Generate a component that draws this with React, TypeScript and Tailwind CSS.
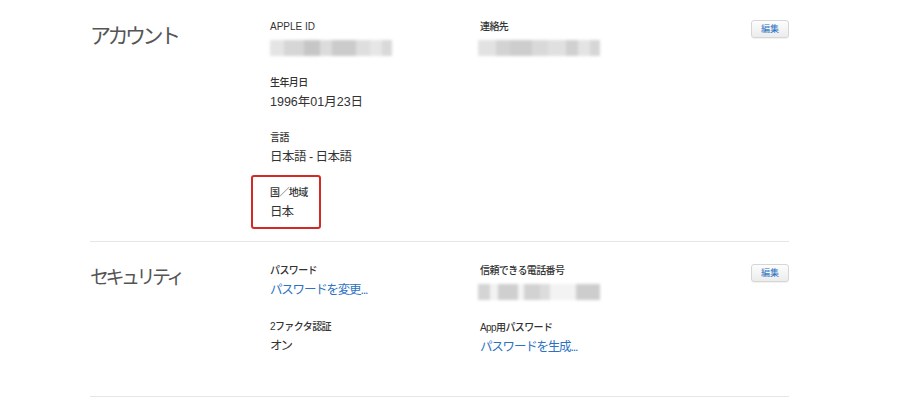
import React from "react";

const font = { fontFamily: '"Liberation Sans", "Noto Sans CJK JP", sans-serif' };

// pixelated/blurred personal data
function Redacted({ blocks }: { blocks: [number, string][] }) {
  return (
    <div className="flex h-[16px] w-[122px] overflow-hidden blur-[1.5px]">
      {blocks.map(([w, c], i) => (
        <div key={i} className="h-full" style={{ width: w, background: c }} />
      ))}
    </div>
  );
}

function Label({ children, latin }: { children: React.ReactNode; latin?: boolean }) {
  return (
    <div className={`text-[10px] leading-[14px] font-medium text-[#333] ${latin ? "" : "tracking-[-0.6px]"}`}>
      {children}
    </div>
  );
}

function Value({ children, link, className = "" }: { children: React.ReactNode; link?: boolean; className?: string }) {
  return (
    <div className={`mt-[3px] text-[12.5px] leading-[18px] ${link ? "text-[#2d72c2]" : "text-[#333]"} ${className}`}>
      {children}
    </div>
  );
}

function EditButton() {
  return (
    <div className="flex items-start">
      <button className="flex h-[18px] w-[38px] items-center justify-center rounded-[3px] border border-[#d6d6d6] bg-gradient-to-b from-[#fdfdfd] to-[#ececec] text-[9px] leading-none text-[#2d72c2] shadow-[0_1px_1px_rgba(0,0,0,0.06)]">
        編集
      </button>
    </div>
  );
}

export default function App() {
  return (
    <div className="min-h-[400px] w-[910px] bg-white" style={font}>
      <div className="ml-[90px] w-[699px]">
        {/* Account */}
        <section className="flex border-b border-[#e6e6e6] pt-[20px] pb-[20px]">
          <h2 className="w-[180px] pt-[2px] text-[21px] leading-[28px] tracking-[-3.5px] text-[#555]">アカウント</h2>
          <div className="flex flex-1">
            <div className="w-[210px]">
              <div>
                <Label latin>APPLE ID</Label>
                <div className="mt-[6px]">
                  <Redacted
                    blocks={[
                      [14, "#e4e4e4"], [20, "#d6d6d6"], [16, "#c6c6c6"], [12, "#dcdcdc"],
                      [24, "#cbcbcb"], [14, "#dedede"], [12, "#e6e6e6"], [10, "#d9d9d9"],
                    ]}
                  />
                </div>
              </div>
              <div className="mt-[20px]">
                <Label>生年月日</Label>
                <Value>1996年01月23日</Value>
              </div>
              <div className="mt-[20px]">
                <Label>言語</Label>
                <Value className="tracking-[-0.5px]">日本語 - 日本語</Value>
              </div>
              <div className="relative mt-[20px]">
                <Label>国／地域</Label>
                <Value className="tracking-[-1px]">日本</Value>
                <div className="pointer-events-none absolute -left-[19px] -top-[11px] h-[54px] w-[70px] rounded-[3px] border-2 border-[#d42a25]" />
              </div>
            </div>
            <div className="flex-1">
              <Label>連絡先</Label>
              <div className="mt-[6px] -ml-[2px]">
                <Redacted
                  blocks={[
                    [18, "#e2e2e2"], [14, "#d3d3d3"], [22, "#cdcdcd"], [16, "#d9d9d9"],
                    [18, "#e0e0e0"], [12, "#d0d0d0"], [12, "#e4e4e4"], [10, "#d6d6d6"],
                  ]}
                />
              </div>
            </div>
            <EditButton />
          </div>
        </section>

        {/* Security */}
        <section className="flex border-b border-[#e6e6e6] pt-[22px] pb-[40px]">
          <h2 className="w-[180px] pt-[1px] text-[19px] leading-[26px] tracking-[-3.5px] text-[#555]">セキュリティ</h2>
          <div className="flex flex-1">
            <div className="w-[210px]">
              <div>
                <Label>パスワード</Label>
                <Value link className="tracking-[-1.2px]">パスワードを変更...</Value>
              </div>
              <div className="mt-[21px]">
                <Label>2ファクタ認証</Label>
                <Value className="tracking-[-2px]">オン</Value>
              </div>
            </div>
            <div className="flex-1">
              <Label>信頼できる電話番号</Label>
              <div className="mt-[6px] -ml-[2px]">
                <Redacted
                  blocks={[
                    [12, "#d4d4d4"], [8, "#f2f2f2"], [20, "#cfcfcf"], [6, "#f4f4f4"],
                    [16, "#d2d2d2"], [10, "#dcdcdc"], [26, "#f3f3f3"], [24, "#cdcdcd"],
                  ]}
                />
              </div>
              <div className="mt-[21px]">
                <Label>App用パスワード</Label>
                <Value link className="tracking-[-1.2px]">パスワードを生成...</Value>
              </div>
            </div>
            <EditButton />
          </div>
        </section>
      </div>
    </div>
  );
}
